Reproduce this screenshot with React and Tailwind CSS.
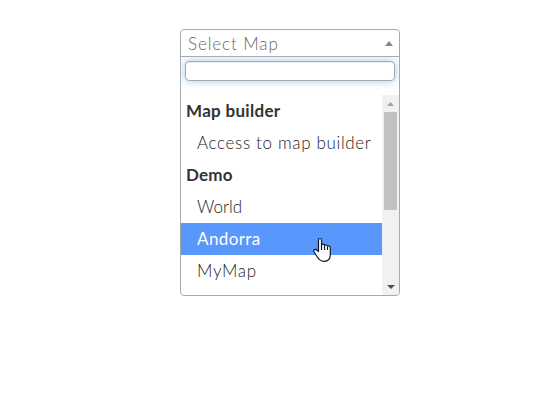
const rows = [
  { label: 'Map builder', group: true, track: 'tracking-[0.3px]' },
  { label: 'Access to map builder', track: 'tracking-[0.65px]' },
  { label: 'Demo', group: true, track: 'tracking-[0.2px]' },
  { label: 'World', track: 'tracking-[0px]' },
  { label: 'Andorra', active: true, track: 'tracking-[0.4px]' },
  { label: 'MyMap', track: 'tracking-[0.7px]' },
];

function Row({ label, group, active, track }) {
  const tone = group
    ? 'pl-[5px] font-bold text-[#333]'
    : active
      ? 'pl-4 bg-[#5897fb] font-normal text-white'
      : 'pl-4 text-[#222]';
  return (
    <li className={`flex h-8 items-center whitespace-nowrap ${tone}`}>
      <span className={track}>{label}</span>
    </li>
  );
}

function HandCursor() {
  return (
    <svg className="absolute left-[313px] top-[237px]" width="19" height="26" viewBox="0 0 19 26">
      <path
        d="M5.5 3.2C5.5.9 8.5.9 8.5 3.2V8.2C9 6.6 11.4 7 11.5 8.4C12.2 7.4 14.2 7.8 14.4 9.2C15.3 8.5 17.3 9 17.3 10.6V17.5C17.3 21.8 15 24.3 11.2 24.3C7.5 24.3 5.8 22.8 4.2 19.8L1 14.8C.2 12.8 2.4 11.6 3.8 13L5.5 14.7Z"
        fill="white"
        stroke="#111827"
        strokeWidth="1.2"
        strokeLinejoin="round"
      />
      <path d="M8.5 8V13M11.5 8.5V13M14.5 9.5V13" stroke="#111827" strokeWidth="1.2" />
    </svg>
  );
}

export default function App() {
  return (
    <div className="relative h-[403px] w-[548px] overflow-hidden bg-white pl-[180px] pt-[29px] font-['Century_Gothic','Lato',sans-serif] text-[17px] font-light">
      <div className="flex h-[267px] w-[220px] flex-col overflow-hidden rounded-[4px] border border-[#aaa] bg-white">
        <div className="flex h-[27px] shrink-0 items-center justify-between border-b border-[#aaa] pl-[7px] pr-1.5 pt-[2px] text-[#666]">
          <span className="tracking-[0.9px]">Select Map</span>
          <svg className="-mt-[2px]" width="8" height="5" viewBox="0 0 8 5">
            <path d="M0 5L4 0L8 5Z" fill="#888" />
          </svg>
        </div>
        <div className="h-[38px] shrink-0 overflow-hidden p-1">
          <div className="h-5 rounded-[4px] border border-[#aaa] bg-white shadow-[inset_0_1px_1px_rgba(0,0,0,0.075),0_0_8px_rgba(82,168,236,0.6)]" />
        </div>
        <div className="flex h-[200px] shrink-0">
          <ul className="w-[201px] shrink-0">
            {rows.map((row) => (
              <Row key={row.label} {...row} />
            ))}
          </ul>
          <div className="flex w-[17px] shrink-0 flex-col items-center bg-[#f1f1f1]">
            <div className="flex h-[17px] items-center justify-center">
              <svg width="7" height="4" viewBox="0 0 7 4">
                <path d="M0 4L3.5 0L7 4Z" fill="#a3a3a3" />
              </svg>
            </div>
            <div className="h-[98px] w-[13px] bg-[#c1c1c1]" />
            <div className="mt-auto flex h-[17px] items-center justify-center">
              <svg width="8" height="4" viewBox="0 0 8 4">
                <path d="M0 0H8L4 4Z" fill="#505050" />
              </svg>
            </div>
          </div>
        </div>
      </div>
      <HandCursor />
    </div>
  );
}
